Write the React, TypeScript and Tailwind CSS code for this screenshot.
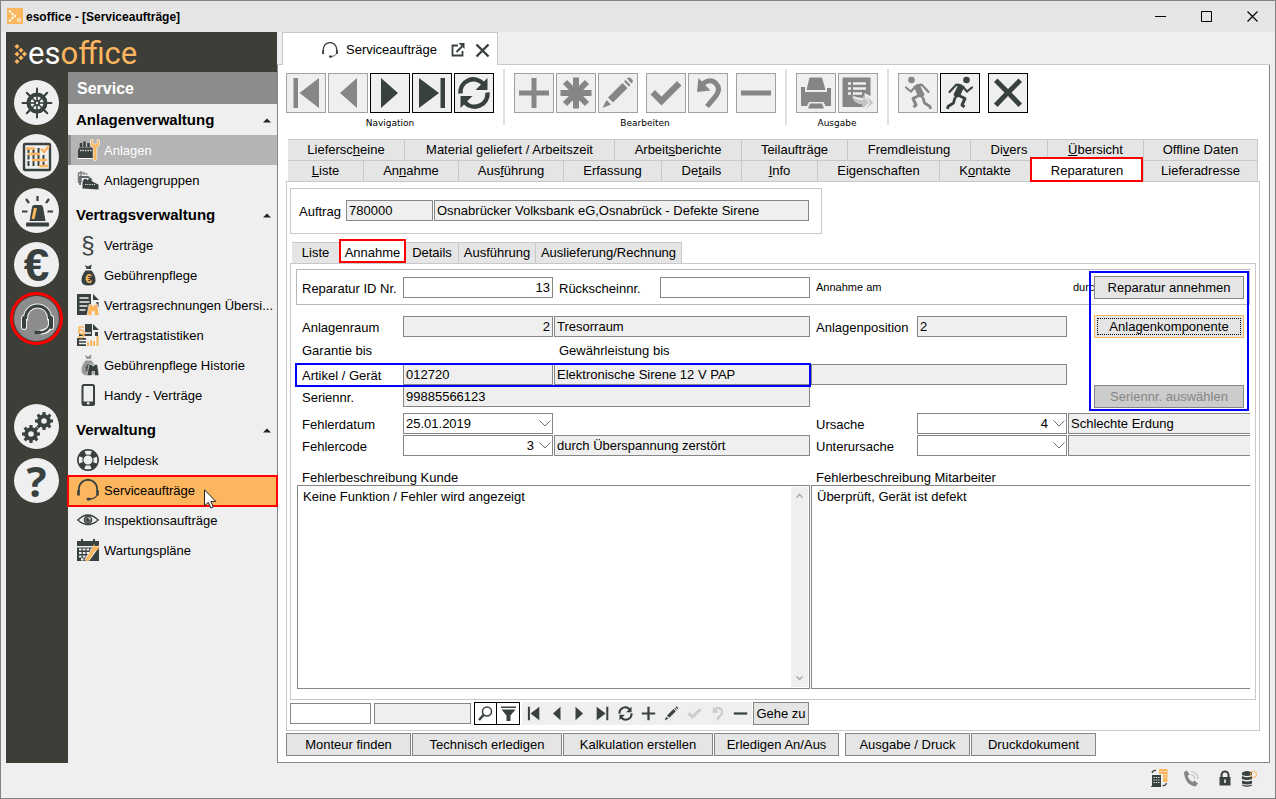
import React, { useState } from 'react';

const DARK = '#384140';
const ORANGE = '#fbb65e';
const GRAY = '#868686';

interface IconProps {
    size?: number;
    box?: number;
    className?: string;
    children?: React.ReactNode;
}

const Icon: React.FC<IconProps> = ({ size = 22, box, className = '', children }) => (
    <svg
        width={size}
        height={size}
        viewBox={`0 0 ${box ?? size} ${box ?? size}`}
        className={`shrink-0 ${className}`}
        fill="none"
        aria-hidden="true"
    >
        {children}
    </svg>
);

const spin = (count: number, cx: number, cy: number, draw: React.ReactElement) =>
    Array.from({ length: count }, (_, i) => (
        <g key={i} transform={`rotate(${(360 / count) * i} ${cx} ${cy})`}>{draw}</g>
    ));

/* ---------- rail icons, 44px box ---------- */

const WheelIcon = () => (
    <Icon size={44}>
        <circle cx="22" cy="22" r="8.500" stroke={DARK} strokeWidth="4" />
        {spin(8, 22, 22, <path d="M22 22V9" stroke={DARK} strokeWidth="1.6" />)}
        {spin(8, 22, 22, <path d="M22 12V7.5" stroke={DARK} strokeWidth="2" strokeLinecap="round" />)}
        <circle cx="22" cy="22" r="3" fill={DARK} />
        <circle cx="22" cy="22" r="1.2" fill="#efefef" />
    </Icon>
);

const PlanIcon = () => (
    <Icon size={44}>
        <rect x="9" y="9" width="26" height="26" rx="1" stroke={DARK} strokeWidth="2.4" />
        <path d="M13.5 13v19M18.5 13v19M23.5 13v19M28.5 20v12" stroke={DARK} strokeWidth="2" strokeDasharray="5 1.5" />
        <path d="M11 13.500h9M13 19h12M17 25h15M24 31h9" stroke={ORANGE} strokeWidth="2.6" />
        <path d="M26 13.500l3 3.500 5-6" stroke={ORANGE} strokeWidth="2.4" />
    </Icon>
);

const SirenIcon = () => (
    <Icon size={44}>
        <path d="M14.500 32l2.500-14q.4-2 2.500-2h6q2.100 0 2.500 2l2.500 14z" fill={DARK} />
        <rect x="11" y="33.500" width="23" height="4" rx="1" fill={DARK} />
        <path d="M20.500 19l-2.500 11" stroke={ORANGE} strokeWidth="3" />
        <path d="M22.500 12V7M14 14l-3-4M31 14l3-4M12.500 22.500H7M32.500 22.500H38" stroke={DARK} strokeWidth="2.200" />
    </Icon>
);

const HeadsetBigIcon = () => (
    <Icon size={44}>
        <g stroke="#efefef" strokeLinecap="round">
            <path d="M10.500 22v-1a12 12 0 0 1 24 0v1" strokeWidth="5" />
            <path d="M9 21v9M36 21v9" strokeWidth="6" />
            <path d="M35 29q-1 6-12 6.500" strokeWidth="5" />
        </g>
        <path d="M10.500 22v-1a12 12 0 0 1 24 0v1" stroke={DARK} strokeWidth="3" />
        <path d="M9 21v9M36 21v9" stroke={DARK} strokeWidth="4" strokeLinecap="round" />
        <path d="M35 28q-1 6-9 7.500" stroke={DARK} strokeWidth="2" />
        <rect x="19.500" y="33.500" width="7" height="4" rx="2" fill={DARK} />
    </Icon>
);

const Gear: React.FC<{ cx: number; cy: number; r: number }> = ({ cx, cy, r }) => (
    <g>
        <circle cx={cx} cy={cy} r={r * 0.6} stroke={DARK} strokeWidth={r * 0.5} />
        {spin(8, cx, cy, <path d={`M${cx} ${cy - r * 0.75}V${cy - r * 1.12}`} stroke={DARK} strokeWidth={r * 0.4} />)}
    </g>
);

const GearsIcon = () => (
    <Icon size={44}>
        <Gear cx={29} cy={16} r={8} />
        <Gear cx={16} cy={29} r={8} />
    </Icon>
);

/* ---------- menu icons, 22px box ---------- */

const Wrench = () => (
    <path
        d="M13.500 1v4q0 2.500 2.700 3.700V20q0 1.700 1.800 1.700T19.800 20V8.700Q22.500 7.500 22.500 5V1l-2.500-.5V5h-4V.5z"
        fill={ORANGE}
        stroke="#f4f4f4"
        strokeWidth=".7"
    />
);

const FactoryIcon = () => (
    <Icon className="overflow-visible">
        <path d="M1 19v-8l1.500-2.500H16V19z" fill={DARK} />
        <path d="M4 8V4M7.500 8V2.500M11.500 8V4" stroke={DARK} strokeWidth="2.500" />
        <path d="M3 11.500h12" stroke="#dcdcdc" strokeWidth="1.500" strokeDasharray="1.500 1" />
        <path d="M0 19.500h15" stroke="#f4f4f4" strokeWidth="1" />
        <Wrench />
    </Icon>
);

const FactoriesIcon = () => (
    <Icon>
        <path d="M1.500 14V4M4 13V2M1 4h5M7 6V3M9.500 6V4" stroke="#7f8483" strokeWidth="1.500" />
        <path d="M3 16V8h8l4 3" stroke="#60676a" strokeWidth="1.800" />
        <path d="M5.500 19.500V13l1.500-3h3v1.500l2-1.500h2v1.500l5 3 2.500 1v5z" fill={DARK} />
        <path d="M8 15.500h11" stroke="#e6e6e6" strokeWidth="1.200" strokeDasharray="1.200 1" />
    </Icon>
);

const ParagraphIcon = () => (
    <span aria-hidden="true" className="w-[22px] shrink-0 text-center text-[24px] leading-[22px] text-[#384140]">§</span>
);

const MoneyBag: React.FC<{ color: string; sign: string }> = ({ color, sign }) => (
    <>
        <path d="M8 1l3 1.500L14.500.500 14 5h-4.500z" fill={color} />
        <path d="M8.500 6.500h6Q19 12 18.500 17q-.5 4.500-7 4.500T4.500 17Q4 12 8.500 6.500z" fill={color} />
        <text x="11.500" y="18.500" textAnchor="middle" fontSize="12" fontWeight="700" fontFamily="Liberation Sans, sans-serif" fill={sign}>€</text>
    </>
);

const Binoculars: React.FC<{ color: string }> = ({ color }) => (
    <path
        d="M12 10.500h3.500V12h1.500v-1.500h3.500l1.500 11h-4.500v-4h-2.500v4H10z"
        fill={color}
        stroke="#efefef"
        strokeWidth=".6"
    />
);

const BagIcon = () => <Icon><MoneyBag color={DARK} sign={ORANGE} /></Icon>;

const BagHistoryIcon = () => (
    <Icon>
        <MoneyBag color="#9a9a9a" sign="#4a5251" />
        <Binoculars color={DARK} />
    </Icon>
);

const DocSearchIcon = () => (
    <Icon>
        <path d="M0 0h14v11l-4 10H0z" fill={DARK} />
        <path d="M2.500 4h9M2.500 8h10M2.500 12h8M2.500 16h6" stroke="#efefef" strokeWidth="1.600" />
        <path d="M16 0l6 6h-6z" fill={DARK} />
        <path d="M20.500 8v5" stroke={DARK} strokeWidth="2" />
        <Binoculars color={ORANGE} />
    </Icon>
);

const DocStatsIcon = () => (
    <Icon>
        <path d="M8 0h7v12H2v-2h6zM0 14h9v8H0z" fill={DARK} />
        <path d="M16 0l6 6h-6zM18 8h3v4h-3z" fill={DARK} />
        <path d="M8 9h6M2 16.500h7M2 19.500h7" stroke="#efefef" strokeWidth="1.300" />
        <text x="4.500" y="12" textAnchor="middle" fontSize="14" fontWeight="700" fontFamily="Liberation Sans, sans-serif" fill={ORANGE}>§</text>
        <path d="M11 22v-4M14 22v-6M17 22v-5M20.500 22v-10" stroke={ORANGE} strokeWidth="2" />
    </Icon>
);

const PhoneIcon = () => (
    <Icon>
        <rect x="5.500" y="1" width="11.500" height="20" rx="1.500" stroke={DARK} strokeWidth="2" />
        <path d="M5 17.500h12.500v3.500H5z" fill={DARK} />
        <circle cx="11.200" cy="19.200" r="1.300" fill="#efefef" />
    </Icon>
);

const LifebuoyIcon = () => (
    <Icon>
        <circle cx="11" cy="11" r="7.500" stroke={DARK} strokeWidth="6" />
        <circle cx="11" cy="11" r="7.500" stroke="#efefef" strokeWidth="3.800" strokeDasharray="5.900 5.880" strokeDashoffset="2.950" />
        <circle cx="11" cy="11" r="10.300" stroke={DARK} strokeWidth="1.200" />
    </Icon>
);

const HeadsetIcon: React.FC<{ size?: number }> = ({ size = 22 }) => (
    <Icon size={size} box={22}>
        <path d="M1.800 13V10a9.200 9.200 0 0 1 18.400 0v3" stroke={DARK} strokeWidth="1.800" />
        <path d="M1.500 11.500v5M20.500 11.500v5" stroke={DARK} strokeWidth="2.600" />
        <path d="M20 16q-1.500 3.500-7 4" stroke={DARK} strokeWidth="1.200" />
        <rect x="9.500" y="18.700" width="4.500" height="2.800" rx="1.400" fill={DARK} />
    </Icon>
);

const EyeIcon = () => (
    <Icon>
        <path d="M.8 11Q11 1 21.200 11 11 20 .8 11z" stroke={DARK} strokeWidth="1.400" />
        <circle cx="11" cy="10.800" r="4.300" fill={DARK} />
        <circle cx="11" cy="10.800" r="2.500" stroke="#a9adac" strokeWidth=".7" />
        <circle cx="12.500" cy="9.500" r="1" fill="#efefef" />
    </Icon>
);

const CalendarIcon = () => (
    <Icon>
        <path d="M0 2h22v5H0zM0 8.500h22V22H0z" fill={DARK} />
        <path d="M5 0v4M17 0v4" stroke={DARK} strokeWidth="2" />
        <path d="M2 10.500h14M2 14h12M2 17.500h9M4 20.300h5" stroke="#efefef" strokeWidth="2.200" strokeDasharray="2.600 1.200" />
        <path d="M10.500 20L18 9.500" stroke="#efefef" strokeWidth="5" />
        <path d="M10.500 20.500L17 10" stroke={ORANGE} strokeWidth="3.500" strokeLinecap="round" />
        <path d="M15 9l2-4 1.500 3 2.500-.5.500-2q1 4-1 5.500t-4 1z" fill={ORANGE} />
    </Icon>
);

/* ---------- toolbar glyphs, 38px box ---------- */

const First = <path d="M6.500 4H11v30H6.500zM32 4v30L12.500 19z" />;
const Prev = <path d="M28 4v30L11 19z" />;
const Next = <path d="M10 4v30l17-15z" />;
const Last = <path d="M27.500 4H32v30h-4.500zM6 4v30l20-15z" />;
const Refresh = (
    <>
        <path d="M5.500 19.500A13 13 0 0 1 28 9.500M32.500 18.500A13 13 0 0 1 10 28.500" fill="none" stroke="currentColor" strokeWidth="4.500" />
        <path d="M32.500 4v12H20.500zM5.500 34V22h12z" />
    </>
);
const Plus = <path d="M16.500 4h5v12.500H34v5H21.500V34h-5V21.500H4v-5h12.500z" />;
const Star = (
    <path d="M19 3.500v31M3.500 19h31M8 8l22 22M30 8L8 30" stroke="currentColor" strokeWidth="6" />
);
const Pencil = (
    <path d="M9 23.500L23.500 9l5 5L14 28.500zM25 7.500l1.500-1.500 5 5-1.500 1.500zM28 4.500l1.500-1q1-.5 2 .5l2 2q1 1 0 2L32.500 9.500zM7.500 26l4.500 4.500-8.500 3.500z" />
);
const Check = <path d="M3.500 20.500l4.500-4.500 6.500 6.500L30 7l4.500 4.500-20 20z" />;
const Undo = (
    <>
        <path d="M14 9.500Q22 4 27 9.500q5.500 6-1 13.500l-8 9.500" fill="none" stroke="currentColor" strokeWidth="5" />
        <path d="M9.500 4L8 18l13.500-1.500z" />
    </>
);
const Minus = <path d="M4 16.500h30v5H4z" />;
const Print = (
    <path d="M12.500 3.500h12.500l3.500 12.500H9.500zM4 13h4v5h22v-4h4v18h-5.500l-2-4H12l-2 4H4zM13 29.500h12l2 5H11z" />
);
const Export = (
    <>
        <path d="M3.500 3.500h28V22l-6-3v5q-9 0-12-3 2 9 10 9v3h-20z" />
        <path d="M9 9.500h3M14 9.500h13M9 14.500h3M14 14.500h13M9 19.500h3M14 19.500h9" stroke="#efefef" strokeWidth="2.500" />
        <path d="M13 22q3 4 11 4v-4.500l6 7-6 6v-4q-9 0-11-8.500zM27 22l7.500 6.500L27 35l4-6.500z" fill="#c4c4c4" />
    </>
);
const Runner = (
    <>
        <circle cx="25.500" cy="6" r="3.300" />
        <path d="M14 10q5-1.500 9.500 2.500L19 22l-4.500 2.500-2-4 4-8z" />
        <path d="M22 13l4 4.500 5-4M15 11l-6.500 7" fill="none" stroke="currentColor" strokeWidth="2.200" strokeLinecap="round" />
        <path d="M16 20.500l8 4-3 6.500 2.500 2" fill="none" stroke="currentColor" strokeWidth="3" strokeLinejoin="round" />
        <path d="M14 23.500L12.500 29 7 32.500l-.5 2.500" fill="none" stroke="currentColor" strokeWidth="2.800" strokeLinejoin="round" />
    </>
);
const Cross = <path d="M5 8l3.500-3.500L19 15 29.500 4.500 33 8 22.500 18.500 33 29.500 29.500 33 19 22 8.500 33 5 29.500l10.500-11z" />;

interface ToolProps {
    label: string;
    active?: boolean;
    mirror?: boolean;
    className?: string;
    children: React.ReactNode;
}

const Tool: React.FC<ToolProps> = ({ label, active = false, mirror = false, className = '', children }) => (
    <button
        type="button"
        aria-label={label}
        title={label}
        className={`size-10 border bg-[#efefef] ${active ? 'border-black text-[#384140]' : 'border-[#a0a0a0] text-[#868686]'} ${className}`}
    >
        <Icon size={38} className={mirror ? '-scale-x-100' : ''}>
            <g fill="currentColor">{children}</g>
        </Icon>
    </button>
);

const ToolGroup: React.FC<{ caption?: string; children: React.ReactNode }> = ({ caption, children }) => (
    <div>
        <div className="flex gap-0.5">{children}</div>
        <div className="mt-[3px] h-[14px] text-center font-['DejaVu_Sans',sans-serif] text-[9px] leading-[14px]">{caption}</div>
    </div>
);

const ToolDivider = () => <div className="mx-[9px] -mt-1 h-14 w-0.5 bg-[#e0e0e0]" />;

/* ---------- form controls ---------- */

interface FieldProps {
    label: string;
    value?: string;
    id?: string;
    readOnly?: boolean;
    right?: boolean;
    className?: string;
}

const Field: React.FC<FieldProps> = ({ label, value = '', id, readOnly = true, right = false, className = '' }) => (
    <input
        id={id}
        type="text"
        aria-label={id ? undefined : label}
        defaultValue={value}
        readOnly={readOnly}
        className={`h-[21px] w-full min-w-0 border border-[#868686] px-0.5 ${readOnly ? 'bg-[#efefef]' : 'bg-white'} ${right ? 'text-right' : ''} ${className}`}
    />
);

const Combo: React.FC<{ id: string; value: string; right?: boolean }> = ({ id, value, right = false }) => (
    <div className="relative">
        <select
            id={id}
            defaultValue={value}
            className={`block h-[21px] w-full appearance-none border border-[#868686] bg-white pl-0.5 pr-[18px] ${right ? '[text-align-last:right]' : ''}`}
        >
            <option value={value}>{value}</option>
        </select>
        <svg width="12" height="7" viewBox="0 0 12 7" fill="none" className="pointer-events-none absolute right-[2px] top-[7px]" aria-hidden="true">
            <path d="M.5.500L6 6 11.500.500" stroke="#707070" />
        </svg>
    </div>
);

const Label: React.FC<{ htmlFor?: string; children: React.ReactNode }> = ({ htmlFor, children }) => (
    <label htmlFor={htmlFor} className="h-[21px] pl-[5px] leading-[23px] whitespace-nowrap">{children}</label>
);

interface PushButtonProps {
    className?: string;
    focused?: boolean;
    disabled?: boolean;
    children: React.ReactNode;
}

const PushButton: React.FC<PushButtonProps> = ({ className = '', focused, disabled, children }) => (
    <button
        type="button"
        disabled={disabled}
        className={`relative h-[23px] shrink-0 border whitespace-nowrap ${focused ? 'border-[#fbb65e] p-0.5' : 'border-[#868686]'} ${disabled ? 'bg-[#cccccc] text-[#868686]' : 'bg-[#e5e5e5]'} ${className}`}
    >
        {focused ? <span className="block border border-dotted border-black leading-[15px]">{children}</span> : children}
    </button>
);

const ROW = 'grid grid-cols-[105px_150px_256px_105px_150px_minmax(0,1fr)] gap-x-px';

/* ---------- side navigation ---------- */

const menu = [
    {
        title: 'Anlagenverwaltung',
        items: [
            { label: 'Anlagen', icon: <FactoryIcon /> },
            { label: 'Anlagengruppen', icon: <FactoriesIcon /> }
        ]
    },
    {
        title: 'Vertragsverwaltung',
        items: [
            { label: 'Verträge', icon: <ParagraphIcon /> },
            { label: 'Gebührenpflege', icon: <BagIcon /> },
            { label: 'Vertragsrechnungen Übersi...', icon: <DocSearchIcon /> },
            { label: 'Vertragstatistiken', icon: <DocStatsIcon /> },
            { label: 'Gebührenpflege Historie', icon: <BagHistoryIcon /> },
            { label: 'Handy - Verträge', icon: <PhoneIcon /> }
        ]
    },
    {
        title: 'Verwaltung',
        items: [
            { label: 'Helpdesk', icon: <LifebuoyIcon /> },
            { label: 'Serviceaufträge', icon: <HeadsetIcon /> },
            { label: 'Inspektionsaufträge', icon: <EyeIcon /> },
            { label: 'Wartungspläne', icon: <CalendarIcon /> }
        ]
    }
];

const rail = [
    { label: 'Steuerung', icon: <WheelIcon />, className: 'bg-[#efefef]' },
    { label: 'Planung', icon: <PlanIcon />, className: 'bg-[#efefef]' },
    { label: 'Alarm', icon: <SirenIcon />, className: 'bg-[#efefef]' },
    { label: 'Finanzen', icon: <span className="text-[46px] leading-[44px] font-bold">€</span>, className: 'bg-[#efefef]' },
    { label: 'Service', icon: <HeadsetBigIcon />, className: 'bg-[#8c8c8c]' },
    { label: 'Einstellungen', icon: <GearsIcon />, className: 'mt-[54px] bg-[#efefef]' },
    { label: 'Hilfe', icon: <span className="font-['Open_Sans',sans-serif] text-[42px] leading-[44px] font-bold">?</span>, className: 'bg-[#efefef]' }
];

const Sidebar = () => {
    const [active, setActive] = useState('Serviceaufträge');

    return (
        <aside className="flex w-[271px] shrink-0 flex-col bg-[#3e3e38]">
            <div className="flex h-10 items-center pt-1 pl-2">
                <svg width="13" height="20" viewBox="0 0 13 20" fill={ORANGE} aria-hidden="true">
                    {[[3, 2.5], [7, 6.2], [10.5, 10], [7, 13.8], [3, 17.5], [3, 10]].map(([x, y]) => (
                        <path key={`${x}-${y}`} d={`M${x} ${y - 2.5}l2.500 2.500-2.500 2.500-2.500-2.500z`} />
                    ))}
                </svg>
                <span className="ml-px font-['Roboto',sans-serif] text-[31px] leading-9 font-normal text-[#fbb65e]">
                    <span className="text-white">es</span>office
                </span>
            </div>
            <div className="flex flex-1">
                <div className="flex w-[62px] flex-col items-start gap-[9px] pt-2 pl-2">
                    {rail.map(({ label, icon, className }) => (
                        <button
                            key={label}
                            type="button"
                            aria-label={label}
                            className={`relative flex size-[45px] shrink-0 items-center justify-center rounded-full text-[#384140] ${className}`}
                        >
                            {icon}
                            {label === 'Service' && <span className="absolute -inset-1 rounded-full border-3 border-[#ff0000]" />}
                        </button>
                    ))}
                </div>
                <nav className="min-w-0 flex-1 bg-[#efefef]">
                    <h2 className="h-8 bg-[#8c8c8c] pl-[9px] text-[16px] leading-[34px] font-bold text-white">Service</h2>
                    {menu.map((group, i) => (
                        <section key={group.title} className={i > 0 ? 'pt-1' : ''}>
                            <h3 className="flex h-[31px] items-center justify-between pt-0.5 pr-1.5 pl-2 text-[15px] font-bold">
                                {group.title}
                                <svg width="8" height="5" viewBox="0 0 8 5" aria-hidden="true"><path d="M0 4.500L4 .5l4 4z" fill="#222" /></svg>
                            </h3>
                            {group.items.map(({ label, icon }) => {
                                const marked = label === active;
                                const opened = label === 'Anlagen';
                                return (
                                    <button
                                        key={label}
                                        type="button"
                                        onClick={() => setActive(label)}
                                        className={`relative flex h-[30px] w-full items-center gap-[5px] pl-[9px] whitespace-nowrap ${marked ? 'bg-[#fbb65e]' : opened ? 'bg-[#b4b4b4] text-white shadow-[inset_3px_0_0_#8c8c8c]' : ''}`}
                                    >
                                        {icon}
                                        <span className="pt-0.5">{label}</span>
                                        {marked && (
                                            <>
                                                <span className="absolute top-0 -right-px -bottom-0.5 -left-px border-2 border-[#ff0000]" />
                                                <svg width="13" height="20" viewBox="0 0 13 20" className="absolute top-[14px] left-[136px] z-10" aria-hidden="true">
                                                    <path d="M.5.800v16l3.800-3.500 2.500 5.700 2.500-1.100-2.500-5.500h5z" fill="#fff" stroke="#222" />
                                                </svg>
                                            </>
                                        )}
                                    </button>
                                );
                            })}
                        </section>
                    ))}
                </nav>
            </div>
        </aside>
    );
};

/* ---------- main tabs ---------- */

const upperTabs = [
    { text: ['Liefersc', 'h', 'eine'], basis: 'basis-[117px]' },
    { text: ['Material geliefert / Arbeitszeit'], basis: 'basis-[210px]' },
    { text: ['Arbeit', 's', 'berichte'], basis: 'basis-[127px]' },
    { text: ['Teilaufträge'], basis: 'basis-[106px]' },
    { text: ['Fremdleistung'], basis: 'basis-[123px]' },
    { text: ['Di', 'v', 'ers'], basis: 'basis-[77px]' },
    { text: ['', 'Ü', 'bersicht'], basis: 'basis-[96px]' },
    { text: ['Offline Daten'], basis: 'basis-[114px]' }
];

const lowerTabs = [
    { text: ['', 'L', 'iste'], basis: 'basis-[76px]' },
    { text: ['An', 'n', 'ahme'], basis: 'basis-[95px]' },
    { text: ['Aus', 'f', 'ührung'], basis: 'basis-[105px]' },
    { text: ['Erfassung'], basis: 'basis-[98px]' },
    { text: ['De', 't', 'ails'], basis: 'basis-[80px]' },
    { text: ['', 'I', 'nfo'], basis: 'basis-[76px]' },
    { text: ['Ei', 'g', 'enschaften'], basis: 'basis-[122px]' },
    { text: ['K', 'o', 'ntakte'], basis: 'basis-[91px]' },
    { text: ['Reparaturen'], basis: 'basis-[113px]' },
    { text: ['Lieferadresse'], basis: 'basis-[114px]' }
];

const TabRow: React.FC<{ tabs: typeof upperTabs }> = ({ tabs }) => (
    <div role="tablist" className="flex">
        {tabs.map(({ text, basis }) => {
            const name = text.join('');
            const selected = name === 'Reparaturen';
            return (
                <button
                    key={name}
                    type="button"
                    role="tab"
                    aria-selected={selected}
                    className={`relative h-[21px] grow border-t border-r border-[#c8c8c8] leading-5 whitespace-nowrap ${basis} ${selected ? 'bg-white' : 'bg-[#e5e5e5]'}`}
                >
                    {selected && <span className="absolute -top-1 right-0 -bottom-px -left-px border-2 border-[#ff0000] bg-white" />}
                    <span className="relative">
                        {text[0]}
                        {text[1] && <u>{text[1]}</u>}
                        {text[2]}
                    </span>
                </button>
            );
        })}
    </div>
);

const detailTabs = [
    { name: 'Liste', width: 'w-[48px]' },
    { name: 'Annahme', width: 'w-[66px]' },
    { name: 'Details', width: 'w-[53px]' },
    { name: 'Ausführung', width: 'w-[77px]' },
    { name: 'Auslieferung/Rechnung', width: 'w-[146px]' }
];

/* ---------- record navigator ---------- */

const navigator = [
    { label: 'Erster', shape: First },
    { label: 'Zurück', shape: Prev },
    { label: 'Weiter', shape: Next },
    { label: 'Letzter', shape: Last },
    { label: 'Aktualisieren', shape: Refresh },
    { label: 'Neu', shape: Plus },
    { label: 'Ändern', shape: Pencil },
    { label: 'Speichern', shape: Check, off: true },
    { label: 'Verwerfen', shape: Undo, off: true },
    { label: 'Löschen', shape: Minus }
];

const RecordNavigator = () => (
    <div className="flex h-[23px] items-center">
        <Field label="Suchtext" readOnly={false} className="max-w-[81px]" />
        <Field label="Suchfeld" className="ml-[3px] max-w-[97px]" />
        <button type="button" aria-label="Suchen" className="ml-[3px] flex h-[23px] w-[23px] shrink-0 items-center justify-center border border-black bg-white">
            <Icon size={17}>
                <circle cx="10" cy="6.500" r="4.500" stroke={DARK} strokeWidth="1.500" />
                <path d="M7 9.500L2 15" stroke={DARK} strokeWidth="2.500" />
            </Icon>
        </button>
        <button type="button" aria-label="Filtern" className="flex h-[23px] w-[23px] shrink-0 items-center justify-center border border-l-0 border-black bg-white">
            <Icon size={17}>
                <path d="M1 1.500h15V3H1zM1.500 4.500h14l-5 6V16h-4v-5.500z" fill={DARK} />
            </Icon>
        </button>
        <div className="ml-0.5 flex h-full items-center bg-[#efefef]">
            {navigator.map(({ label, shape, off }) => (
                <button
                    key={label}
                    type="button"
                    aria-label={label}
                    className={`flex h-full w-[23px] items-center justify-center ${off ? 'text-[#cccccc]' : 'text-[#384140]'}`}
                >
                    <Icon size={17} box={38}><g fill="currentColor">{shape}</g></Icon>
                </button>
            ))}
        </div>
        <PushButton className="ml-px w-[56px]">Gehe zu</PushButton>
    </div>
);

const RepairForm = () => (
    <div className="flex flex-1 flex-col border border-[#c8c8c8] px-[5px] pt-[5px] pb-2.5">
        <div className="relative">
            <div className="border border-[#b8b8b8] pt-[7px] pb-1.5">
                <div className={`${ROW} items-center`}>
                    <Label htmlFor="repair-id">Reparatur ID Nr.</Label>
                    <Field id="repair-id" label="Reparatur ID Nr." value="13" readOnly={false} right />
                    <div className="grid grid-cols-[105px_150px] gap-x-px">
                        <Label htmlFor="return-no">Rückscheinnr.</Label>
                        <Field id="return-no" label="Rückscheinnr." readOnly={false} />
                    </div>
                    <span className="pl-[5px] text-[11px]">Annahme am</span>
                    <span />
                    <div className="flex h-[21px] items-center justify-between px-[5px]">
                        {/* caption runs on behind the button */}
                        <span className="w-5 text-[11px]">durch</span>
                        <PushButton className="w-[150px]">Reparatur annehmen</PushButton>
                    </div>
                </div>
            </div>

            <div className={`${ROW} mt-[11px] pl-px`}>
                <Label htmlFor="room">Anlagenraum</Label>
                <Field id="room" label="Anlagenraum" value="2" right />
                <Field label="Raumbezeichnung" value="Tresorraum" />
                <Label htmlFor="position">Anlagenposition</Label>
                <Field id="position" label="Anlagenposition" value="2" />
                <div className="flex h-[21px] items-center justify-end pr-1.5">
                    <PushButton className="w-[150px]" focused>Anlagenkomponente</PushButton>
                </div>
            </div>

            <div className={`${ROW} mt-0.5 pl-px`}>
                <Label>Garantie bis</Label>
                <span />
                <Label>Gewährleistung bis</Label>
            </div>

            <div className={`${ROW} relative mt-1 pl-px`}>
                <Label htmlFor="article">Artikel / Gerät</Label>
                <Field id="article" label="Artikel / Gerät" value="012720" />
                <Field label="Artikelbezeichnung" value="Elektronische Sirene 12 V PAP" />
                <Field label="Zusatz" className="col-span-2" />
                <span className="pointer-events-none absolute -top-px -left-px h-6 w-[516px] border-2 border-[#0000ff]" />
            </div>

            <div className={`${ROW} mt-px pl-px`}>
                <Label htmlFor="serial">Seriennr.</Label>
                <Field id="serial" label="Seriennr." value="99885566123" className="col-span-2" />
                <div className="col-span-3 flex h-[21px] items-center justify-end pr-1.5">
                    <PushButton className="w-[150px]" disabled>Seriennr. auswählen</PushButton>
                </div>
            </div>
            <span className="pointer-events-none absolute top-0.5 right-px -bottom-1 w-[160px] border-2 border-[#0000ff]" />
        </div>

        <div className={`${ROW} mt-1.5 pl-px`}>
            <Label htmlFor="fault-date">Fehlerdatum</Label>
            <Combo id="fault-date" value="25.01.2019" />
            <span />
            <Label htmlFor="cause">Ursache</Label>
            <Combo id="cause" value="4" right />
            <Field label="Ursache Text" value="Schlechte Erdung" className="border-r-0" />
        </div>
        <div className={`${ROW} mt-px pl-px`}>
            <Label htmlFor="fault-code">Fehlercode</Label>
            <Combo id="fault-code" value="3" right />
            <Field label="Fehlercode Text" value="durch Überspannung zerstört" />
            <Label htmlFor="sub-cause">Unterursache</Label>
            <Combo id="sub-cause" value="" />
            <Field label="Unterursache Text" className="border-r-0" />
        </div>

        <div className="mt-[10px] grid flex-1 grid-cols-[513px_minmax(0,1fr)] gap-x-px pl-px">
            <div className="flex flex-col">
                <div className="h-[19px]"><Label htmlFor="customer-text">Fehlerbeschreibung Kunde</Label></div>
                <div className="flex flex-1 border border-[#868686]">
                    <textarea
                        id="customer-text"
                        className="block min-w-0 flex-1 resize-none px-[5px] py-[3px] leading-4"
                        defaultValue="Keine Funktion / Fehler wird angezeigt"
                    />
                    <div className="my-px mr-px flex w-[17px] flex-col items-center justify-between bg-[#efefef] py-1.5">
                        <svg width="7" height="5" viewBox="0 0 7 5" fill="none" aria-hidden="true"><path d="M.5 4.500l3-3 3 3" stroke="#a8a8a8" strokeWidth="1.500" /></svg>
                        <svg width="7" height="5" viewBox="0 0 7 5" fill="none" aria-hidden="true"><path d="M.5.500l3 3 3-3" stroke="#a8a8a8" strokeWidth="1.500" /></svg>
                    </div>
                </div>
            </div>
            <div className="flex flex-col">
                <div className="h-[19px]"><Label htmlFor="staff-text">Fehlerbeschreibung Mitarbeiter</Label></div>
                <textarea
                    id="staff-text"
                    className="block flex-1 resize-none border border-r-0 border-[#868686] px-[5px] py-[3px] leading-4"
                    defaultValue="Überprüft, Gerät ist defekt"
                />
            </div>
        </div>
    </div>
);

const StatusBar = () => (
    <footer className="flex h-[35px] items-center justify-end pr-[17px] pb-[5px]">
        <Icon size={18}>
            <path d="M9 0h8.500v13H13V5H9z" fill={ORANGE} />
            <path d="M10.500 2.500h6M13.500 5.500h3M13.500 8.500h3" stroke="#efefef" strokeWidth="1" strokeDasharray="1.200 1" />
            <path d="M2 6h9v12H1v-1h1z" fill={DARK} />
            <path d="M3.500 8.500h7M3.500 11h7M3.500 13.500h7" stroke="#efefef" strokeWidth="1.200" strokeDasharray="1.300 1" />
            <path d="M2 4Q3 1 6 1.500M16.500 14q-.5 3-4 2.500" stroke={DARK} strokeWidth="1.300" />
        </Icon>
        <Icon size={17} className="ml-[15px]">
            <path d="M1 2l3-1.500 2.500 4-2 1.500q1.500 4 5 6l2-1.500 3.500 3-2.500 3Q2 15 1 2z" fill={GRAY} />
            <path d="M7.500 4.500q4 .5 4.500 4.500M8 1.500q6.500.5 7 7.500" stroke="#c4c4c4" strokeWidth="1.200" />
        </Icon>
        <Icon size={16} className="ml-[17px]">
            <path d="M4.500 8V5a3.500 3.500 0 0 1 7 0v3" stroke={DARK} strokeWidth="2" />
            <path d="M2.500 7h11v8.500h-11z" fill={DARK} />
            <path d="M8 9.500v3.500" stroke="#efefef" strokeWidth="1.600" />
        </Icon>
        <Icon size={17} className="ml-[8px]">
            <path d="M1 2.500q5-3 10 0V5q-5 2-10 0zM1 6q5 2.500 10 0v3q-5 2-10 0zM1 10.500q5 2 10 0v3q-5 2-10 0zM1 14.500q5 2 10 0v1q-5 2.500-10 0z" fill={DARK} />
            <circle cx="12.500" cy="4.500" r="3" stroke={ORANGE} strokeWidth="1.500" strokeDasharray="1.500 .8" />
        </Icon>
    </footer>
);

const TitleBar = () => (
    <header className="flex h-[31px] items-center bg-[#e5e5e5] pl-1.5">
        <Icon size={16} className="-mt-0.5">
            <rect width="16" height="16" fill={ORANGE} />
            <path d="M3 2l1.500 1.500L3 5 1.500 3.500zM5.500 4.500L7 6 5.500 7.500 4 6zM8 6.500L9.500 8 8 9.500 6.500 8zM5.500 8.500L7 10l-1.500 1.500L4 10zM3 11l1.500 1.500L3 14l-1.500-1.500z" fill="#fff" />
            <circle cx="12" cy="12" r="1.500" stroke="#fff" />
        </Icon>
        <h1 className="ml-[3px] flex-1 text-[12px] font-bold">esoffice - [Serviceaufträge]</h1>
        <button type="button" aria-label="Minimieren" className="flex h-full w-[46px] items-center justify-center">
            <Icon size={11}><path d="M0 5.500h11" stroke="#000" /></Icon>
        </button>
        <button type="button" aria-label="Maximieren" className="flex h-full w-[46px] items-center justify-center">
            <Icon size={11}><path d="M.5.500h10v10H.5z" stroke="#000" /></Icon>
        </button>
        <button type="button" aria-label="Schließen" className="flex h-full w-[46px] items-center justify-center">
            <Icon size={11}><path d="M.5.500l10 10M10.500.500l-10 10" stroke="#000" strokeWidth="1.200" /></Icon>
        </button>
    </header>
);

export default function App() {
    return (
        <div className="flex min-h-screen flex-col border border-[#828282] bg-[#efefef] font-['Liberation_Sans',Arial,sans-serif] text-[13px] text-black">
            <TitleBar />
            <div className="mr-[5px] ml-[5px] flex flex-1">
                <Sidebar />
                <div className="flex min-w-0 flex-1 flex-col">
                    <div className="flex h-[33px] border-b border-[#c8c8c8] pl-[5px]">
                        <div className="-mb-px flex w-[216px] items-center border border-b-0 border-[#c8c8c8] bg-white pt-0.5 pl-[39px]">
                            <HeadsetIcon size={16} />
                            <span className="ml-2 flex-1">Serviceaufträge</span>
                            <button type="button" aria-label="In neuem Fenster öffnen">
                                <Icon size={14}>
                                    <path d="M7 2.500H1.500v10h10V8" stroke={DARK} strokeWidth="1.800" />
                                    <path d="M5.500 9L11 3.500" stroke={DARK} strokeWidth="2" />
                                    <path d="M7.500 0H13.500v6z" fill={DARK} />
                                </Icon>
                            </button>
                            <button type="button" aria-label="Tab schließen" className="mr-[7px] ml-2.5">
                                <Icon size={15}><path d="M1.500 1.500l12 12M13.500 1.500l-12 12" stroke={DARK} strokeWidth="2.400" /></Icon>
                            </button>
                        </div>
                    </div>
                    <main className="flex flex-1 flex-col border border-t-0 border-[#868686] bg-white pt-2 pr-[9px] pb-1.5 pl-2">
                        <div className="mb-[9px] flex">
                            <ToolGroup caption="Navigation">
                                <Tool label="Erster">{First}</Tool>
                                <Tool label="Zurück">{Prev}</Tool>
                                <Tool label="Weiter" active>{Next}</Tool>
                                <Tool label="Letzter" active>{Last}</Tool>
                                <Tool label="Aktualisieren" active>{Refresh}</Tool>
                            </ToolGroup>
                            <ToolDivider />
                            <ToolGroup caption="Bearbeiten">
                                <Tool label="Neu">{Plus}</Tool>
                                <Tool label="Kopieren">{Star}</Tool>
                                <Tool label="Ändern">{Pencil}</Tool>
                                <Tool label="Speichern" className="ml-1.5">{Check}</Tool>
                                <Tool label="Verwerfen">{Undo}</Tool>
                                <Tool label="Löschen" className="ml-1.5">{Minus}</Tool>
                            </ToolGroup>
                            <ToolDivider />
                            <ToolGroup caption="Ausgabe">
                                <Tool label="Drucken">{Print}</Tool>
                                <Tool label="Exportieren">{Export}</Tool>
                            </ToolGroup>
                            <ToolDivider />
                            <ToolGroup>
                                <Tool label="Start" mirror>{Runner}</Tool>
                                <Tool label="Ausführen" active>{Runner}</Tool>
                                <Tool label="Schließen" active className="ml-1.5">{Cross}</Tool>
                            </ToolGroup>
                        </div>

                        <div className="px-0.5">
                            <TabRow tabs={upperTabs} />
                            <TabRow tabs={lowerTabs} />
                        </div>

                        <div className="flex flex-1 flex-col border border-[#c8c8c8] px-[3px] pt-1.5 pb-[5px]">
                            <div className="flex h-[46px] w-[532px] items-start border border-[#c8c8c8] pt-[11px] pr-3">
                                <label htmlFor="order" className="w-[55px] shrink-0 pl-2 leading-[23px]">Auftrag</label>
                                <div className="grid flex-1 grid-cols-[87px_minmax(0,1fr)] gap-px">
                                    <Field id="order" label="Auftrag" value="780000" />
                                    <Field label="Auftragstext" value="Osnabrücker Volksbank eG,Osnabrück - Defekte Sirene" />
                                </div>
                            </div>

                            <div role="tablist" className="mt-2 flex pl-0.5">
                                {detailTabs.map(({ name, width }) => (
                                    <button
                                        key={name}
                                        type="button"
                                        role="tab"
                                        aria-selected={name === 'Annahme'}
                                        className={`relative h-[21px] border-t border-r border-[#c8c8c8] bg-[#e5e5e5] leading-5 whitespace-nowrap ${width}`}
                                    >
                                        {name === 'Annahme' && <span className="absolute -top-1 -right-px bottom-0 -left-px border-2 border-[#ff0000] bg-white" />}
                                        <span className="relative">{name}</span>
                                    </button>
                                ))}
                            </div>
                            <RepairForm />
                            <div className="pt-0.5">
                                <RecordNavigator />
                            </div>
                        </div>

                        <div className="mt-0.5 flex gap-px">
                            <PushButton className="w-[125px]">Monteur finden</PushButton>
                            <PushButton className="w-[150px]">Technisch erledigen</PushButton>
                            <PushButton className="w-[150px]">Kalkulation erstellen</PushButton>
                            <PushButton className="w-[125px]">Erledigen An/Aus</PushButton>
                            <PushButton className="ml-[5px] w-[125px]">Ausgabe / Druck</PushButton>
                            <PushButton className="w-[125px]">Druckdokument</PushButton>
                        </div>
                    </main>
                </div>
            </div>
            <StatusBar />
        </div>
    );
}
